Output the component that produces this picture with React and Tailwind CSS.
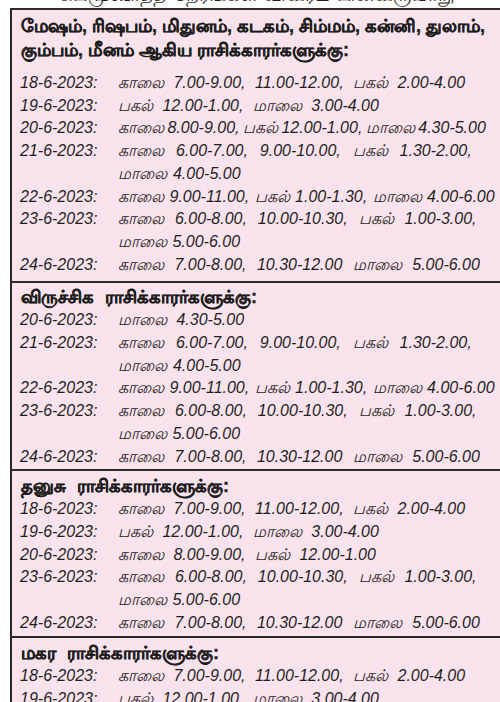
import React from "react";

const W18 = "[word-spacing:5px]";
const W19 = "[word-spacing:5px]";
const W20 = "[word-spacing:-1px]";
const W21 = "[word-spacing:1.5px]";
const W22 = "[word-spacing:1px]";
const W23 = "[word-spacing:1px]";
const W24 = "[word-spacing:6px]";

const sections = [
  {
    title: ["மேஷம், ரிஷபம், மிதுனம், கடகம், சிம்மம், கன்னி, துலாம்,", "கும்பம், மீனம் ஆகிய ராசிக்காரர்களுக்கு:"],
    head: "pt-[4px] pb-[10px]",
    body: "pb-[5px]",
    rows: [
      ["18-6-2023:", ["காலை 7.00-9.00, 11.00-12.00, பகல் 2.00-4.00"], W18],
      ["19-6-2023:", ["பகல் 12.00-1.00, மாலை 3.00-4.00"], W19],
      ["20-6-2023:", ["காலை 8.00-9.00, பகல் 12.00-1.00, மாலை 4.30-5.00"], W20],
      ["21-6-2023:", ["காலை  6.00-7.00,  9.00-10.00,  பகல்  1.30-2.00,", "மாலை 4.00-5.00"], W21],
      ["22-6-2023:", ["காலை 9.00-11.00, பகல் 1.00-1.30, மாலை 4.00-6.00"], W22],
      ["23-6-2023:", ["காலை  6.00-8.00,  10.00-10.30,  பகல்  1.00-3.00,", "மாலை 5.00-6.00"], W23],
      ["24-6-2023:", ["காலை 7.00-8.00, 10.30-12.00 மாலை 5.00-6.00"], W24],
    ],
  },
  {
    title: ["விருச்சிக ராசிக்காரர்களுக்கு:"],
    head: "pt-[2px] [word-spacing:6px]",
    body: "pb-[1px]",
    rows: [
      ["20-6-2023:", ["மாலை 4.30-5.00"], W19],
      ["21-6-2023:", ["காலை  6.00-7.00,  9.00-10.00,  பகல்  1.30-2.00,", "மாலை 4.00-5.00"], W21],
      ["22-6-2023:", ["காலை 9.00-11.00, பகல் 1.00-1.30, மாலை 4.00-6.00"], W22],
      ["23-6-2023:", ["காலை  6.00-8.00,  10.00-10.30,  பகல்  1.00-3.00,", "மாலை 5.00-6.00"], W23],
      ["24-6-2023:", ["காலை 7.00-8.00, 10.30-12.00 மாலை 5.00-6.00"], W24],
    ],
  },
  {
    title: ["தனுசு ராசிக்காரர்களுக்கு:"],
    head: "pt-[3px] [word-spacing:6px]",
    body: "pb-[2px]",
    rows: [
      ["18-6-2023:", ["காலை 7.00-9.00, 11.00-12.00, பகல் 2.00-4.00"], W18],
      ["19-6-2023:", ["பகல் 12.00-1.00, மாலை 3.00-4.00"], W19],
      ["20-6-2023:", ["காலை 8.00-9.00, பகல் 12.00-1.00"], W19],
      ["23-6-2023:", ["காலை  6.00-8.00,  10.00-10.30,  பகல்  1.00-3.00,", "மாலை 5.00-6.00"], W23],
      ["24-6-2023:", ["காலை 7.00-8.00, 10.30-12.00 மாலை 5.00-6.00"], W24],
    ],
  },
  {
    title: ["மகர ராசிக்காரர்களுக்கு:"],
    head: "pt-[3px] [word-spacing:6px]",
    body: "pb-[2px]",
    rows: [
      ["18-6-2023:", ["காலை 7.00-9.00, 11.00-12.00, பகல் 2.00-4.00"], W18],
      ["19-6-2023:", ["பகல் 12.00-1.00, மாலை 3.00-4.00"], W19],
    ],
  },
];

export default function App() {
  return (
    <div className="w-[500px] h-[702px] overflow-hidden bg-white text-[#1e1e1e]" style={{ fontFamily: '"Liberation Sans", "Noto Sans", sans-serif' }}>
      <div className="h-[8px] overflow-hidden">
        <div className="-mt-[18px] pl-[60px] text-[20px] leading-[24px] whitespace-nowrap">
          சுபமுகூர்த்த நேரங்கள் விவரம் பின்வருமாறு
        </div>
      </div>
      <div className="ml-[10px] w-[520px] border-l-2 border-t-2 border-[#2a2a2a] bg-[#fbe3ed]">
        {sections.map((s, i) => (
          <div key={i} className={i > 0 ? "border-t-2 border-[#2a2a2a]" : ""}>
            <div className={`pl-[9px] font-bold text-[18px] leading-[24px] [-webkit-text-stroke:0.4px_#1e1e1e] ${s.head}`}>
              {s.title.map((t, j) => (
                <div key={j} className="whitespace-nowrap">{t}</div>
              ))}
            </div>
            <div className={s.body}>
              {s.rows.map(([d, lines, ws], k) => (
                <div key={k} className="grid grid-cols-[106px_1fr] italic text-[16px] leading-[22.7px]">
                  <div className="pl-[8px] whitespace-nowrap">{d}</div>
                  <div className={ws}>
                    {lines.map((l, m) => (
                      <div key={m} className="whitespace-pre">{l}</div>
                    ))}
                  </div>
                </div>
              ))}
            </div>
          </div>
        ))}
      </div>
    </div>
  );
}
